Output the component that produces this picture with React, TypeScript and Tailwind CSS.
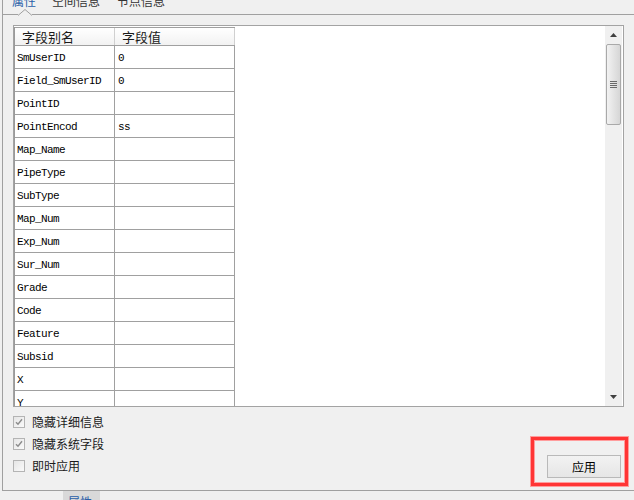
import React from "react";

const cjk = "font-['Noto_Sans_CJK_SC','Noto_Sans',sans-serif]";
const mono = "font-['Liberation_Mono','DejaVu_Sans_Mono',monospace]";

const rows: [string, string][] = [
  ["SmUserID", "0"],
  ["Field_SmUserID", "0"],
  ["PointID", ""],
  ["PointEncod", "ss"],
  ["Map_Name", ""],
  ["PipeType", ""],
  ["SubType", ""],
  ["Map_Num", ""],
  ["Exp_Num", ""],
  ["Sur_Num", ""],
  ["Grade", ""],
  ["Code", ""],
  ["Feature", ""],
  ["Subsid", ""],
  ["X", ""],
  ["Y", ""],
];

const Check = ({ checked, label }: { checked: boolean; label: string }) => (
  <div className="flex h-[22px] items-center">
    <span className="flex h-[12px] w-[12px] items-center justify-center border border-[#b4b4b4] bg-gradient-to-br from-[#e6e6e6] to-[#fafafa]">
      {checked && (
        <svg width="8" height="8" viewBox="0 0 8 8">
          <path d="M1 4.2 L3 6.3 L7 1.2" fill="none" stroke="#8c8c8c" strokeWidth="1.4" />
        </svg>
      )}
    </span>
    <span className={`ml-[7px] text-[12px] leading-[16px] text-[#1a1a1a] ${cjk}`}>{label}</span>
  </div>
);

const ScrollBar = () => (
  <div className="flex w-[17px] flex-col bg-[#f0f0f0]">
    <div className="flex h-[18px] items-center justify-center">
      <svg width="7" height="4" viewBox="0 0 7 4">
        <path d="M0 4 L3.5 0 L7 4 Z" fill="#404040" />
      </svg>
    </div>
    <div className="mx-[1px] flex h-[81px] items-center justify-center rounded-[2px] border border-[#a9a9a9] bg-gradient-to-r from-[#f2f2f2] via-[#e4e4e4] to-[#d6d6d6]">
      <div className="flex flex-col gap-[1px]">
        <div className="h-px w-[7px] bg-[#6a6a6a]" />
        <div className="h-px w-[7px] bg-[#6a6a6a]" />
        <div className="h-px w-[7px] bg-[#6a6a6a]" />
        <div className="h-px w-[7px] bg-[#6a6a6a]" />
      </div>
    </div>
    <div className="flex-1" />
    <div className="flex h-[18px] items-center justify-center">
      <svg width="7" height="4" viewBox="0 0 7 4">
        <path d="M0 0 L3.5 4 L7 0 Z" fill="#404040" />
      </svg>
    </div>
  </div>
);

export default function App() {
  return (
    <div className={`relative h-[500px] w-[634px] overflow-hidden bg-[#f0f0f0] ${cjk}`}>
      <div className="ml-[2px] flex h-[491px] flex-col border-b border-l border-[#a0a0a0]">
        {/* top tabs, scrolled off */}
        <div className="relative h-[15px] border-b border-[#a0a0a0]">
          <div className="h-[14px] overflow-hidden">
            <div className="-mt-[7px] flex pl-[9px] text-[12px] leading-[16px]">
              <span className="text-[#2a5ea8]">属性</span>
              <span className="ml-[16px] text-[#333]">空间信息</span>
              <span className="ml-[17px] text-[#333]">节点信息</span>
            </div>
          </div>
          <svg className="absolute left-[15px] top-[9px]" width="14" height="7" viewBox="0 0 14 7">
            <rect x="0" y="5" width="14" height="2" fill="#f0f0f0" />
            <path d="M0 6.5 L7 0.5 L14 6.5" fill="none" stroke="#a0a0a0" />
          </svg>
        </div>

        {/* grid panel */}
        <div className="ml-[10px] mt-[10px] flex h-[382px] w-[611px] border border-[#a3a3a3] bg-white">
          <div className="flex-1 overflow-hidden pt-[1px]">
            <div className={`w-[221px] border-l border-[#9a9a9a] ${mono}`}>
              <div className="flex h-[19px] border-b border-t border-[#a0a0a0] bg-gradient-to-b from-white to-[#f2f2f2]">
                <div className={`w-[100px] border-r border-[#d0d0d0] pl-[7px] text-[13px] leading-[17px] text-[#1a1a1a] ${cjk}`}>
                  字段别名
                </div>
                <div className={`w-[120px] border-r border-[#d0d0d0] pl-[7px] text-[13px] leading-[17px] text-[#1a1a1a] ${cjk}`}>
                  字段值
                </div>
              </div>
              {rows.map(([k, v]) => (
                <div key={k} className="flex h-[23px] border-b border-[#a0a0a0] text-[11px] tracking-[-0.6px] text-black">
                  <div className="flex w-[100px] items-center border-r border-[#a0a0a0] pl-[2px] pt-[2px]">{k}</div>
                  <div className="flex w-[120px] items-center border-r border-[#a0a0a0] pl-[3px] pt-[2px]">{v}</div>
                </div>
              ))}
            </div>
          </div>
          <ScrollBar />
          <div className="w-px" />
        </div>

        {/* options */}
        <div className="flex flex-1 items-end justify-between pl-[10px] pr-[13px]">
          <div className="mb-[13px] flex flex-col">
            <Check checked label="隐藏详细信息" />
            <Check checked label="隐藏系统字段" />
            <Check checked={false} label="即时应用" />
          </div>
          <button className="mb-[12px] flex h-[23px] w-[74px] items-center justify-center border border-[#b9b9b9] bg-gradient-to-b from-[#f2f2f2] to-[#e6e6e6] text-[12px] leading-[16px] text-black">
            应用
          </button>
        </div>
      </div>

      {/* bottom tab */}
      <div className="flex h-[9px] pl-[63px]">
        <div className="h-[9px] w-[37px] overflow-hidden bg-[#d9d9d9] pl-[5px] pt-[3px] text-[12px] leading-[16px] text-[#2a5ea8]">
          属性
        </div>
      </div>

      {/* red annotation */}
      <div className="absolute left-[531px] top-[437px] h-[49px] w-[97px] border-[3px] border-[#ff3535] shadow-[0_0_0_1px_#ff9d9d,inset_0_0_0_1px_#ff9d9d]" />
    </div>
  );
}
